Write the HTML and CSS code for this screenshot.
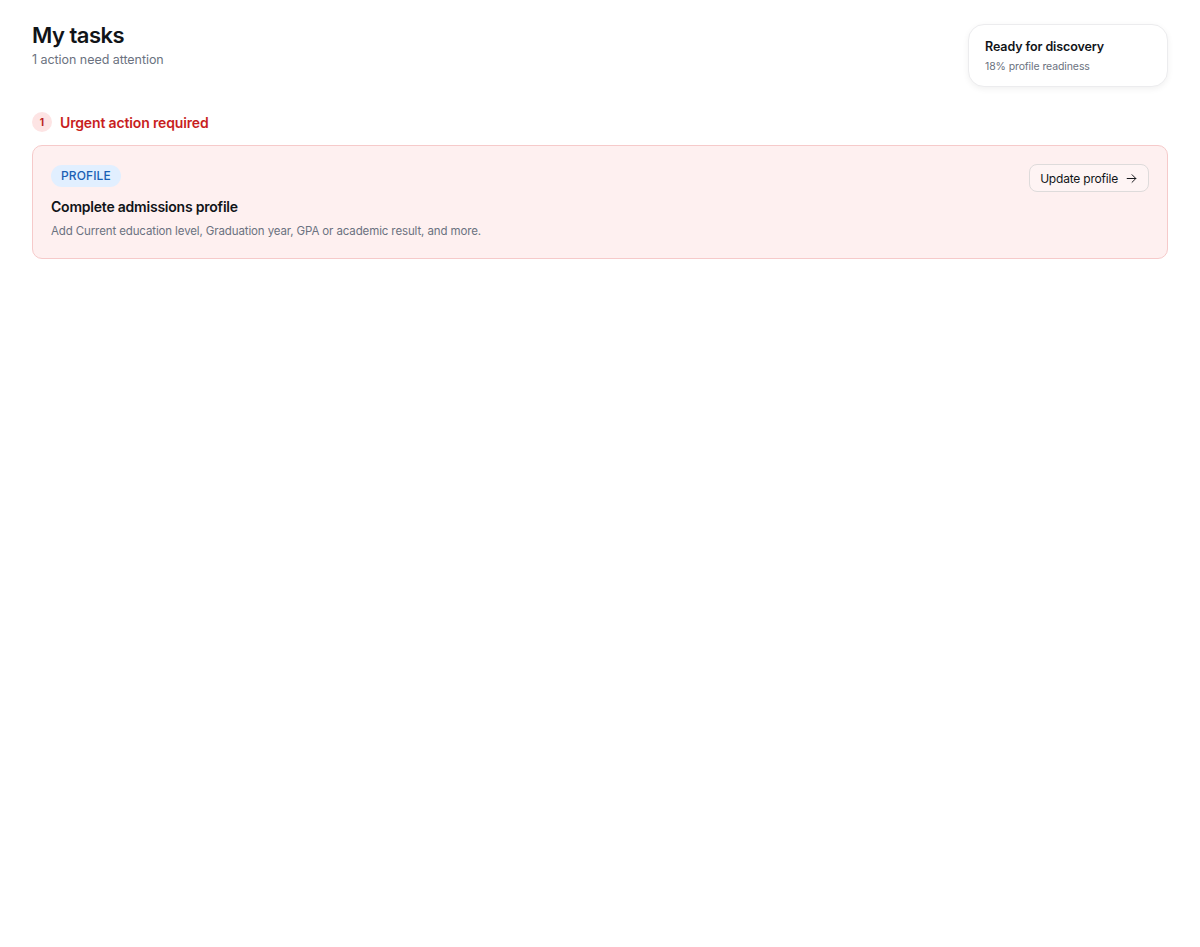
FILE: index.html
```html
<!DOCTYPE html>
<html lang="en">
<head>
<meta charset="utf-8">
<title>My tasks</title>
<link rel="stylesheet" href="styles.css">
</head>
<body>
<main class="page">
  <header class="top">
    <div class="heading">
      <h1 class="title">My tasks</h1>
      <p class="subtitle">1 action need attention</p>
    </div>
    <div class="status-card">
      <div class="status-title">Ready for discovery</div>
      <div class="status-sub">18% profile readiness</div>
    </div>
  </header>

  <section class="group">
    <div class="group-head">
      <span class="count">1</span>
      <span class="group-title">Urgent action required</span>
    </div>
    <div class="task">
      <div class="task-body">
        <span class="tag">PROFILE</span>
        <div class="task-title">Complete admissions profile</div>
        <div class="task-desc">Add Current education level, Graduation year, GPA or academic result, and more.</div>
      </div>
      <button class="btn" type="button">Update profile
        <svg width="13" height="13" viewBox="0 0 24 24" fill="none" stroke="currentColor" stroke-width="1.8" stroke-linecap="round" stroke-linejoin="round"><path d="M4 12h16"/><path d="M13 5l7 7-7 7"/></svg>
      </button>
    </div>
  </section>
</main>
</body>
</html>
```

FILE: styles.css
```css
* { box-sizing: border-box; }
html, body { margin: 0; background: #ffffff; }
body {
  font-family: Inter, "Noto Sans", "Liberation Sans", sans-serif;
  color: #111418;
}
.page { padding: 23px 32px; }
.top {
  display: flex;
  justify-content: space-between;
  align-items: flex-start;
}
.title {
  margin: 0;
  font-size: 22px;
  line-height: 24px;
  font-weight: 600;
  letter-spacing: -0.5px;
  color: #111418;
}
.subtitle {
  margin: 5px 0 0;
  font-size: 12.5px;
  line-height: 16px;
  letter-spacing: -0.05px;
  color: #6b7280;
}
.status-card {
  width: 200px;
  height: 63px;
  margin-top: 1px;
  border: 1px solid #ececee;
  border-radius: 16px;
  box-shadow: 0 2px 6px rgba(0,0,0,0.06);
  padding: 14px 16px 0;
  background: #fff;
}
.status-title {
  font-size: 12.5px;
  line-height: 16px;
  font-weight: 600;
  letter-spacing: -0.1px;
  color: #111418;
}
.status-sub {
  margin-top: 5px;
  font-size: 10.5px;
  line-height: 14px;
  letter-spacing: -0.1px;
  color: #6b7280;
}
.group { margin-top: 25px; }
.group-head {
  display: flex;
  align-items: center;
  gap: 8px;
}
.count {
  width: 20px;
  height: 20px;
  border-radius: 50%;
  background: #fde4e4;
  color: #b91c1c;
  font-size: 10px;
  font-weight: 700;
  display: flex;
  align-items: center;
  justify-content: center;
}
.group-title {
  font-size: 14px;
  font-weight: 600;
  letter-spacing: -0.15px;
  color: #c81e1e;
}
.task {
  margin-top: 13px;
  display: flex;
  justify-content: space-between;
  align-items: flex-start;
  background: #fef0f0;
  border: 1px solid #f6caca;
  border-radius: 10px;
  padding: 18px 18px 19px 18px;
}
.tag {
  display: inline-block;
  height: 22px;
  line-height: 22px;
  padding: 0 10px;
  border-radius: 11px;
  background: #e1efff;
  color: #1b5fb4;
  font-size: 12px;
  font-weight: 500;
  letter-spacing: 0.1px;
}
.task-title {
  margin-top: 11px;
  font-size: 14px;
  line-height: 18px;
  font-weight: 600;
  letter-spacing: -0.22px;
  color: #111418;
}
.task-desc {
  margin-top: 7px;
  font-size: 11.5px;
  line-height: 16px;
  letter-spacing: -0.12px;
  color: #6b7280;
}
.btn {
  display: flex;
  align-items: center;
  gap: 7px;
  height: 28px;
  padding: 0 10px;
  border: 1px solid #dedbdb;
  border-radius: 8px;
  background: rgba(255,255,255,0.25);
  font-family: inherit;
  font-size: 12px;
  letter-spacing: -0.2px;
  color: #111418;
  cursor: pointer;
}
```
